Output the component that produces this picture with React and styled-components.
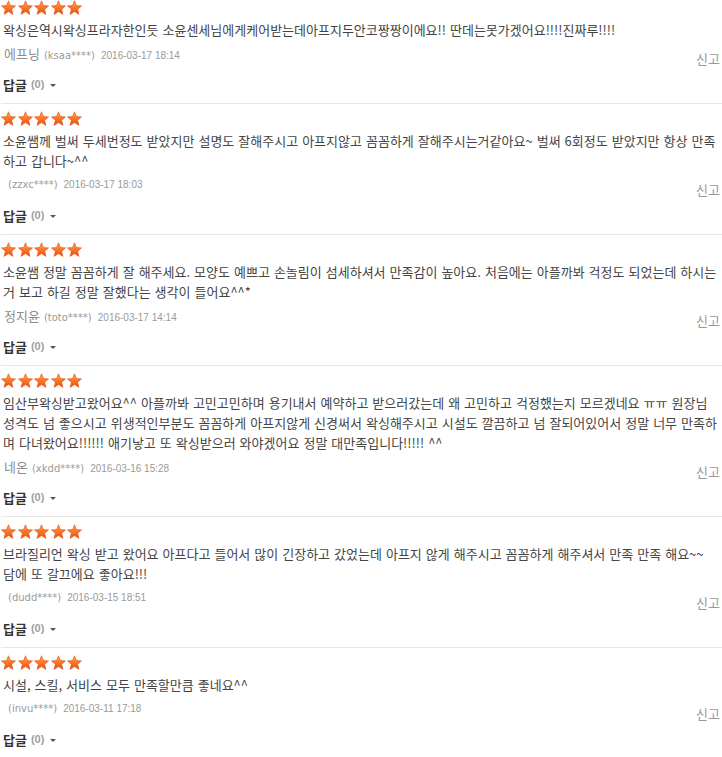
import React from 'react'
import styled, { createGlobalStyle } from 'styled-components'

const GlobalStyle = createGlobalStyle`
  html, body {
    margin: 0;
    padding: 0;
    background: #fff;
  }
  body {
    font-family: "Noto Sans CJK KR", "Liberation Sans", sans-serif;
    font-size: 13px;
    color: #444;
  }
`;

const reviews = [
  {
    text: '왁싱은역시왁싱프라자한인듯 소윤센세님에게케어받는데아프지두안코짱짱이에요!! 딴데는못가겠어요!!!!진짜루!!!!',
    name: '에프닝', id: '(ksaa****)', date: '2016-03-17 18:14',
  },
  {
    text: '소윤쌤께 벌써 두세번정도 받았지만 설명도 잘해주시고 아프지않고 꼼꼼하게 잘해주시는거같아요~ 벌써 6회정도 받았지만 항상 만족하고 갑니다~^^',
    name: '', id: '(zzxc****)', date: '2016-03-17 18:03',
  },
  {
    text: '소윤쌤 정말 꼼꼼하게 잘 해주세요. 모양도 예쁘고 손놀림이 섬세하셔서 만족감이 높아요. 처음에는 아플까봐 걱정도 되었는데 하시는거 보고 하길 정말 잘했다는 생각이 들어요^^*',
    name: '정지윤', id: '(toto****)', date: '2016-03-17 14:14',
  },
  {
    text: '임산부왁싱받고왔어요^^ 아플까봐 고민고민하며 용기내서 예약하고 받으러갔는데 왜 고민하고 걱정했는지 모르겠네요 ㅠㅠ 원장님 성격도 넘 좋으시고 위생적인부분도 꼼꼼하게 아프지않게 신경써서 왁싱해주시고 시설도 깔끔하고 넘 잘되어있어서 정말 너무 만족하며 다녀왔어요!!!!!! 애기낳고 또 왁싱받으러 와야겠어요 정말 대만족입니다!!!!! ^^',
    name: '네온', id: '(xkdd****)', date: '2016-03-16 15:28',
  },
  {
    text: '브라질리언 왁싱 받고 왔어요 아프다고 들어서 많이 긴장하고 갔었는데 아프지 않게 해주시고 꼼꼼하게 해주셔서 만족 만족 해요~~\n담에 또 갈끄에요 좋아요!!!',
    name: '', id: '(dudd****)', date: '2016-03-15 18:51',
  },
  {
    text: '시설, 스킬, 서비스 모두 만족할만큼 좋네요^^',
    name: '', id: '(invu****)', date: '2016-03-11 17:18',
  },
];

const List = styled.ul`
  list-style: none;
  margin: 0 0 0 1px;
  padding: 0;
`;

const Item = styled.li`
  padding: 7px 2px 9px 2px;
  border-bottom: 1px solid #e6e6e6;
  &:first-child {
    padding-top: 0;
  }
`;

const StarRow = styled.div`
  display: flex;
  gap: 1.5px;
  height: 20px;
  margin-left: -2px;
`;

const Body = styled.p`
  margin: 0;
  line-height: 20px;
  word-spacing: 1.1px;
  white-space: pre-line;
  color: #444;
`;

const MetaRow = styled.div`
  display: flex;
  align-items: flex-start;
  justify-content: space-between;
  height: 20px;
  margin-top: 4px;
  line-height: 20px;
`;

const Author = styled.div`
  display: flex;
  align-items: baseline;
  margin-left: 1px;
`;

const Name = styled.span`
  color: #8c8c8c;
  font-size: 13px;
`;

const UserId = styled.span`
  margin-left: 4px;
  font-family: "DejaVu Sans", Verdana, sans-serif;
  font-size: 10px;
  color: #9a9a9a;
`;

const DateText = styled.span`
  margin-left: 6px;
  font-family: "Liberation Sans", Arial, sans-serif;
  font-size: 10px;
  color: #9a9a9a;
`;

const Report = styled.a`
  margin-top: 5px;
  color: #999;
  font-size: 13px;
  text-decoration: none;
  cursor: pointer;
`;

const ReplyRow = styled.div`
  display: flex;
  align-items: center;
  height: 20px;
  margin-top: 10px;
`;

const ReplyLabel = styled.strong`
  font-weight: 700;
  color: #333;
  font-size: 13px;
`;

const ReplyCount = styled.span`
  margin-left: 4px;
  font-family: "Liberation Sans", Arial, sans-serif;
  font-weight: 700;
  font-size: 11px;
  color: #a0a0a0;
`;

const Caret = styled.span`
  display: inline-block;
  width: 0;
  height: 0;
  margin: 2px 0 0 6px;
  border-top: 3px solid #555;
  border-left: 3px solid transparent;
  border-right: 3px solid transparent;
`;

function Star({ uid }) {
  const gid = `sg-${uid}`;
  return (
    <svg width="15" height="16" viewBox="0 0 15 16">
      <defs>
        <linearGradient id={gid} x1="0" y1="0" x2="0" y2="1">
          <stop offset="0" stopColor="#ffb15a" />
          <stop offset="0.45" stopColor="#ff7a2a" />
          <stop offset="1" stopColor="#ec4a12" />
        </linearGradient>
      </defs>
      <path
        d="M7.5 0.8 L9.4 5.6 L14.5 5.9 L10.6 9.2 L11.9 14.4 L7.5 11.5 L3.1 14.4 L4.4 9.2 L0.5 5.9 L5.6 5.6 Z"
        fill={`url(#${gid})`}
        stroke="#e05a1c"
        strokeWidth="0.7"
        strokeLinejoin="round"
      />
    </svg>
  );
}

function Stars({ index }) {
  return (
    <StarRow>
      {[0, 1, 2, 3, 4].map(i => <Star key={i} uid={`${index}-${i}`} />)}
    </StarRow>
  );
}

function Review({ review, index }) {
  return (
    <Item>
      <Stars index={index} />
      <Body>{review.text}</Body>
      <MetaRow>
        <Author>
          {review.name && <Name>{review.name}</Name>}
          <UserId>{review.id}</UserId>
          <DateText>{review.date}</DateText>
        </Author>
        <Report>신고</Report>
      </MetaRow>
      <ReplyRow>
        <ReplyLabel>답글</ReplyLabel>
        <ReplyCount>(0)</ReplyCount>
        <Caret />
      </ReplyRow>
    </Item>
  );
}

export default function App() {
  return (
    <>
      <GlobalStyle />
      <List>
        {reviews.map((r, i) => <Review key={i} review={r} index={i} />)}
      </List>
    </>
  );
}
